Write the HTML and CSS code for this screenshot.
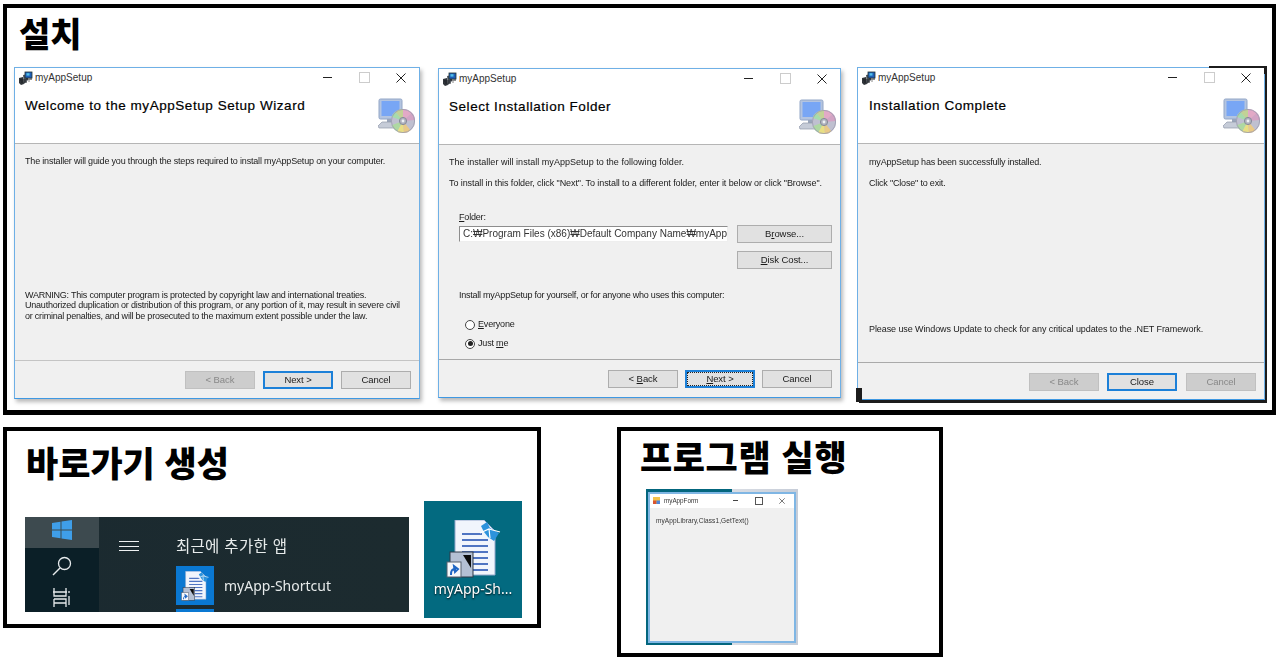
FILE: index.html
```html
<!DOCTYPE html>
<html lang="ko">
<head>
<meta charset="utf-8">
<title>설치</title>
<link rel="stylesheet" href="styles.css">
</head>
<body>
<svg class="defs" width="0" height="0" aria-hidden="true">
  <defs>
    <clipPath id="cdclip"><circle cx="25" cy="23" r="12"/></clipPath>
    <symbol id="setup" viewBox="0 0 37 35">
      <rect x="1" y="1" width="23" height="20" rx="1.5" fill="#b3c4e0" stroke="#93a6c6"/>
      <rect x="3.5" y="3" width="18" height="15" fill="#78a6f5"/>
      <rect x="9" y="21" width="7" height="3" fill="#9aa6bb"/>
      <path d="M0 28l4-4h13l3 4-2 2H1z" fill="#c6ccd8" stroke="#8f98ab" stroke-width=".7"/>
      <g clip-path="url(#cdclip)">
        <rect x="12" y="10" width="26" height="26" fill="#bfc0d0"/>
        <path d="M25 23L25 10 36 13z" fill="#e2a9c6"/>
        <path d="M25 23L36 13 38 22z" fill="#d3a3c4"/>
        <path d="M25 23L12 18 16 12z" fill="#a6dcab"/>
        <path d="M25 23L16 12 25 10z" fill="#c2d296"/>
        <path d="M25 23L18 36 12 28z" fill="#aed8a2"/>
        <path d="M25 23L18 36 26 36z" fill="#e8df84"/>
        <path d="M25 23L26 36 33 33z" fill="#e9c987"/>
      </g>
      <circle cx="25" cy="23" r="11.6" fill="none" stroke="#9a9aae" stroke-width=".8"/>
      <circle cx="25" cy="23" r="3.6" fill="#b0b3bf" stroke="#878b9a"/>
      <circle cx="25" cy="23" r="1.4" fill="#eef0f4"/>
    </symbol>
    <symbol id="appicon" viewBox="0 0 14 14">
      <path d="M0 7l4-1 1 7-3 1-2-2z" fill="#30353a"/>
      <path d="M4 4l5-1v6l-4 4z" fill="#50575f"/>
      <rect x="6" y="1" width="7" height="6" fill="#1f5fb8" stroke="#233" stroke-width=".8"/>
      <rect x="7.5" y="2.2" width="3" height="2.4" fill="#52c0e8"/>
      <path d="M1 9h6M2 11h6M7 8h6" stroke="#1c2024" stroke-width="1"/>
      <path d="M10 7v4" stroke="#888" stroke-width="1"/>
    </symbol>
    <symbol id="closex" viewBox="0 0 10 10">
      <path d="M.5.500l9 9M9.500.500l-9 9" stroke="#222" stroke-width="1" fill="none"/>
    </symbol>
    <symbol id="doc" viewBox="0 0 55 58">
      <path d="M9 0h29l11 11v44H9z" fill="#f1f5fc" stroke="#93a8cc"/>
      <path d="M16 14h20M16 20h26M16 26h26M16 32h26M16 38h26M27 44h15M27 50h15" stroke="#4f74c2" stroke-width="2.200"/>
      <path d="M35 6l6-4 3 6 9 5-5 8-6-4-4-5z" fill="#2d93dc"/>
      <path d="M34 13l9-4 1 9M43 9l11 3" fill="none" stroke="#fff" stroke-width="1.200"/>
      <rect x="4" y="32" width="23" height="25" fill="#b4c0d4" stroke="#2f3846"/>
      <path d="M17 35h8v13z" fill="#0c0c0c"/>
      <rect x="1" y="42" width="14" height="15" fill="#f6f8fb" stroke="#56606f"/>
      <path d="M5 55c0-5 1-6 5-6M8 46l4 3-3 3z" fill="none" stroke="#1f66c4" stroke-width="2"/>
    </symbol>
  </defs>
</svg>

<main class="sheet">
  <section class="panel panel-install">
    <h1 class="heading heading-install">설치</h1>
    <div class="win-row">
      <article class="win win-one">
        <header class="titlebar">
          <svg class="app-icon"><use href="#appicon"/></svg>
          <span class="title-text">myAppSetup</span>
          <span class="controls">
            <i class="ctl ctl-min"></i><i class="ctl ctl-max"></i><i class="ctl"><svg class="close-x"><use href="#closex"/></svg></i>
          </span>
        </header>
        <div class="banner">
          <h2 class="banner-title">Welcome to the myAppSetup Setup Wizard</h2>
          <svg class="setup-icon"><use href="#setup"/></svg>
        </div>
        <div class="content">
          <p class="line">The installer will guide you through the steps required to install myAppSetup on your computer.</p>
          <p class="warning">WARNING: This computer program is protected by copyright law and international treaties.<br>Unauthorized duplication or distribution of this program, or any portion of it, may result in severe civil<br>or criminal penalties, and will be prosecuted to the maximum extent possible under the law.</p>
        </div>
        <footer class="actions">
          <span class="btn btn-off">&lt; Back</span>
          <span class="btn btn-default">Next &gt;</span>
          <span class="btn">Cancel</span>
        </footer>
      </article>

      <article class="win win-two">
        <header class="titlebar">
          <svg class="app-icon"><use href="#appicon"/></svg>
          <span class="title-text">myAppSetup</span>
          <span class="controls">
            <i class="ctl ctl-min"></i><i class="ctl ctl-max"></i><i class="ctl"><svg class="close-x"><use href="#closex"/></svg></i>
          </span>
        </header>
        <div class="banner">
          <h2 class="banner-title">Select Installation Folder</h2>
          <svg class="setup-icon"><use href="#setup"/></svg>
        </div>
        <div class="content">
          <p class="line line-full">The installer will install myAppSetup to the following folder.</p>
          <p class="line line-wide line-next">To install in this folder, click "Next". To install to a different folder, enter it below or click "Browse".</p>
          <div class="folder">
            <div class="folder-main">
              <p class="line"><u>F</u>older:</p>
              <div class="path">C:₩Program Files (x86)₩Default Company Name₩myApp</div>
            </div>
            <div class="folder-btns">
              <span class="btn btn-wide">B<u>r</u>owse...</span>
              <span class="btn btn-wide"><u>D</u>isk Cost...</span>
            </div>
          </div>
          <p class="line line-install">Install myAppSetup for yourself, or for anyone who uses this computer:</p>
          <div class="radio-row radio-first"><i class="radio"></i><span class="line"><u>E</u>veryone</span></div>
          <div class="radio-row"><i class="radio radio-on"></i><span class="line">Just <u>m</u>e</span></div>
        </div>
        <footer class="actions">
          <span class="btn">&lt; <u>B</u>ack</span>
          <span class="btn btn-default btn-focus"><u>N</u>ext &gt;</span>
          <span class="btn">Cancel</span>
        </footer>
      </article>

      <article class="win win-three">
        <header class="titlebar">
          <svg class="app-icon"><use href="#appicon"/></svg>
          <span class="title-text">myAppSetup</span>
          <span class="controls">
            <i class="ctl ctl-min"></i><i class="ctl ctl-max"></i><i class="ctl"><svg class="close-x"><use href="#closex"/></svg></i>
          </span>
        </header>
        <div class="banner">
          <h2 class="banner-title">Installation Complete</h2>
          <svg class="setup-icon"><use href="#setup"/></svg>
        </div>
        <div class="content">
          <p class="line">myAppSetup has been successfully installed.</p>
          <p class="line line-next">Click "Close" to exit.</p>
          <p class="line line-wide line-update">Please use Windows Update to check for any critical updates to the .NET Framework.</p>
        </div>
        <footer class="actions">
          <span class="btn btn-off">&lt; Back</span>
          <span class="btn btn-default">Close</span>
          <span class="btn btn-off">Cancel</span>
        </footer>
      </article>
    </div>
  </section>

  <div class="lower">
    <section class="panel panel-shortcut">
      <h1 class="heading heading-shortcut">바로가기 생성</h1>
      <div class="shots">
        <div class="startmenu">
          <div class="rail">
            <div class="rail-tile">
              <svg class="win-logo" viewBox="0 0 20 20"><path d="M0 3l8.500-1.200V9.500H0zM9.500 1.600L20 0v9.500H9.500zM0 10.500h8.500v7.700L0 17zM9.500 10.500H20V20L9.500 18.400z" fill="#3f9ee8"/></svg>
            </div>
            <svg class="rail-search" viewBox="0 0 20 20"><circle cx="12.500" cy="7.500" r="6" fill="none" stroke="#e6eaec" stroke-width="1.300"/><path d="M8 12l-7 7" stroke="#e6eaec" stroke-width="1.500"/></svg>
            <svg class="rail-tasks" viewBox="0 0 20 20"><path d="M2 1v8h12V1M1 5h14M2 12h12v8M2 12v8M2 16h12M17 4v2M17 9v9" fill="none" stroke="#e6eaec" stroke-width="1.300"/></svg>
          </div>
          <div class="burger-col"><i class="burger"></i></div>
          <div class="applist">
            <div class="applist-head">최근에 추가한 앱</div>
            <div class="app-row">
              <span class="app-tile"><svg class="app-doc"><use href="#doc"/></svg></span>
              <span class="app-name">myApp-Shortcut</span>
            </div>
            <span class="app-tile app-tile-next"></span>
          </div>
        </div>
        <div class="desktop">
          <svg class="desktop-doc"><use href="#doc"/></svg>
          <span class="desktop-label">myApp-Sh...</span>
        </div>
      </div>
    </section>

    <section class="panel panel-run">
      <h1 class="heading heading-run">프로그램 실행</h1>
      <div class="formshot">
        <article class="form">
          <header class="form-bar">
            <svg class="form-icon" viewBox="0 0 8 8"><rect width="8" height="8" fill="#f3c24a"/><rect y="4" width="4" height="4" fill="#d9542f"/><rect x="4" y="4" width="4" height="4" fill="#4f86d9"/></svg>
            <span class="form-title">myAppForm</span>
            <span class="form-controls">
              <i class="fctl fctl-min"></i><i class="fctl fctl-max"></i><i class="fctl"><svg class="form-x"><use href="#closex"/></svg></i>
            </span>
          </header>
          <div class="form-body">myAppLibrary,Class1,GetText()</div>
        </article>
      </div>
    </section>
  </div>
</main>
</body>
</html>
```

FILE: styles.css
```css
* { box-sizing: border-box; }
html, body { margin: 0; padding: 0; background: #fff; }
body { width: 1284px; height: 666px; overflow: hidden; }
.defs { position: absolute; }
p { margin: 0; }
i { font-style: normal; }

.sheet { padding: 4px 0 0 3px; font-family: "Liberation Sans", Arial, sans-serif; color: #1a1a1a; }

.panel { border: 4px solid #000; background: #fff; }
.panel-install { width: 1273px; height: 411px; border-bottom-width: 5px; }
.lower { display: flex; align-items: flex-start; gap: 76px; margin-top: 12px; }
.panel-shortcut { width: 538px; height: 201px; }
.panel-run { width: 326px; height: 230px; }

.heading { margin: 0; font-family: "Noto Sans CJK KR", sans-serif; font-weight: 900; color: #000; font-size: 35px; line-height: 44px; }
.heading-install { height: 59px; padding: 3px 0 0 12px; font-size: 34px; }
.heading-shortcut { height: 70px; padding: 9px 0 0 19px; }
.heading-run { height: 58px; padding: 3px 0 0 19px; letter-spacing: .6px; }

.win-row { display: flex; align-items: flex-start; padding-left: 7px; }
.win { display: flex; flex-direction: column; position: relative; background: #f0f0f0; border: 1px solid #6fb0e6; border-bottom-color: #3f98e2; box-shadow: 2px 3px 4px rgba(0,0,0,.28); filter: blur(.35px); }
.win-one { width: 406px; height: 332px; }
.win-two { width: 403px; height: 330px; margin: 1px 0 0 18px; }
.win-three { width: 408px; height: 333px; margin-left: 16px; box-shadow: 2px 3px 0 #1c1c1c; }
.win-three::before { content: ""; position: absolute; z-index: -1; top: -2px; right: -3px; width: 58px; height: 8px; background: #1c1c1c; }
.win-three::after { content: ""; position: absolute; z-index: -1; left: -2px; bottom: -3px; width: 6px; height: 14px; background: #1c1c1c; }

.titlebar { display: flex; align-items: center; height: 19px; padding: 0 0 0 4px; background: #fff; flex: none; }
.app-icon { width: 14px; height: 14px; flex: none; }
.title-text { margin-left: 2px; font-size: 10px; color: #333; }
.controls { display: flex; margin-left: auto; }
.ctl { display: flex; align-items: center; justify-content: center; width: 36.500px; height: 17px; }
.ctl-min::before { content: ""; width: 9px; height: 1px; background: #222; }
.ctl-max::before { content: ""; width: 9px; height: 9px; border: 1px solid #ccc; }
.close-x { width: 10px; height: 10px; }

.banner { display: flex; justify-content: space-between; flex: none; padding: 11px 4px 0 10px; height: 57px; background: #fff; border-bottom: 1px solid #b5b5b5; }
.banner-title { margin: 0; font-family: "Liberation Sans", Arial, sans-serif; font-size: 13.500px; line-height: 16px; font-weight: 400; letter-spacing: .55px; color: #000; -webkit-text-stroke: .2px #000; }
.setup-icon { width: 37px; height: 35px; flex: none; }

.content { display: flex; flex-direction: column; flex: 1; padding: 12px 10px 0; min-height: 0; }
.line { font-size: 9px; line-height: 11px; color: #1a1a1a; letter-spacing: -.18px; }
.line-wide { letter-spacing: -.09px; }
.line-full { letter-spacing: .03px; }
.line-next { margin-top: 10px; }
.warning { margin-top: auto; padding-bottom: 39px; font-size: 9px; line-height: 10.500px; color: #1a1a1a; letter-spacing: -.22px; white-space: nowrap; }
.line-update { margin-top: auto; padding-bottom: 27px; }

.win-three .banner { padding-left: 11px; }
.win-three .content { padding: 13px 11px 0; }

.folder { display: flex; gap: 9px; margin: 23px 0 0 10px; }
.folder-main { width: 269px; }
.path { width: 269px; height: 16px; margin-top: 3px; padding-left: 3px; overflow: hidden; white-space: nowrap; background: #fff; border: 1px solid #8d8d8d; border-right-color: #eee; border-bottom-color: #eee; font-size: 10px; line-height: 14px; color: #333; }
.folder-btns { display: flex; flex-direction: column; gap: 8px; margin-top: 13px; }
.line-install { margin: 21px 0 0 10px; letter-spacing: -.24px; }
.radio-row { display: flex; align-items: center; gap: 3px; height: 11px; margin: 8px 0 0 16px; }
.radio-first { margin-top: 18px; }
.radio { width: 10px; height: 10px; border: 1px solid #444; border-radius: 50%; background: #fff; position: relative; flex: none; }
.radio-on::after { content: ""; position: absolute; inset: 1.500px; border-radius: 50%; background: #222; }

.actions { display: flex; justify-content: flex-end; gap: 8px; height: 38px; padding: 10px 8px 0 0; border-top: 1px solid #c4c4c4; flex: none; }
.win-two .actions { border-top-color: #a8a8a8; gap: 7px; }
.win-three .actions { border-top-color: #aaa; height: 37px; }
.win-three .btn:last-child { margin-left: 1px; }
.btn { display: block; width: 70px; height: 18px; background: #e1e1e1; border: 1px solid #adadad; font-size: 9.500px; line-height: 16px; text-align: center; letter-spacing: -.08px; color: #1a1a1a; flex: none; }
.btn-wide { width: 95px; }
.btn-off { background: #cdcdcd; border-color: #c0c0c0; color: #888; }
.btn-default { border: 2px solid #1c80d8; line-height: 14px; }
.btn-focus { outline: 1px dotted #222; outline-offset: -3px; }

.shots { display: flex; align-items: flex-start; gap: 15px; padding-left: 18px; }
.startmenu { display: flex; width: 384px; height: 95px; margin-top: 16px; overflow: hidden; background: linear-gradient(90deg, #1b2a30, #1c2b2f); filter: blur(.3px); }
.rail { display: flex; flex-direction: column; align-items: center; width: 74px; background: #0b1f27; flex: none; }
.rail-tile { display: flex; justify-content: center; width: 100%; height: 31px; padding-top: 3px; background: #3d4a4f; flex: none; }
.win-logo { width: 20px; height: 20px; }
.rail-search { width: 20px; height: 20px; margin-top: 8px; flex: none; }
.rail-tasks { width: 20px; height: 20px; margin-top: 11px; flex: none; }
.burger-col { width: 77px; padding: 24px 0 0 20px; flex: none; }
.burger { display: block; width: 20px; height: 10px; border-top: 1px solid #eef1f2; border-bottom: 1px solid #eef1f2; position: relative; }
.burger::after { content: ""; position: absolute; left: 0; right: 0; top: 3.500px; height: 1px; background: #eef1f2; }
.applist { flex: 1; }
.applist-head { height: 49px; padding-top: 18px; font-family: "Noto Sans CJK KR", sans-serif; font-size: 15.500px; line-height: 20px; letter-spacing: .3px; color: #e8ecec; }
.app-row { display: flex; align-items: center; gap: 10px; }
.app-tile { display: flex; align-items: center; justify-content: center; width: 38px; height: 39px; background: #0a78d2; flex: none; }
.app-tile-next { height: 8px; margin-top: 4px; }
.app-doc { width: 28px; height: 30px; }
.app-name { font-family: "Noto Sans", sans-serif; font-size: 14px; color: #e6eaea; }

.desktop { display: flex; flex-direction: column; align-items: center; width: 98px; height: 117px; padding-top: 19px; background: #036a80; filter: blur(.3px); }
.desktop-doc { width: 55px; height: 58px; flex: none; }
.desktop-label { margin-top: 1px; font-family: "Noto Sans", sans-serif; font-size: 14px; line-height: 20px; color: #fff; white-space: nowrap; text-shadow: 0 1px 2px #000; }

.formshot { width: 152px; height: 156px; margin-left: 25px; padding: 3px 2px 2px; background: linear-gradient(90deg, #03667e 0, #03667e 86px, #d9dde4 86px, #c6cdd8 100%); }
.form { display: flex; flex-direction: column; height: 100%; background: #f0f0f0; border: 2px solid #7fb6e4; filter: blur(.3px); }
.form-bar { display: flex; align-items: center; height: 14px; padding: 0 0 1px 3px; background: #fff; flex: none; }
.form-icon { width: 7px; height: 7px; flex: none; }
.form-title { margin-left: 4px; font-size: 6.300px; color: #333; }
.form-controls { display: flex; margin-left: auto; }
.fctl { display: flex; align-items: center; justify-content: center; width: 23.500px; height: 13px; }
.fctl-min::before { content: ""; width: 5px; height: 1px; background: #444; }
.fctl-max::before { content: ""; width: 6px; height: 6px; border: 1px solid #555; }
.form-x { width: 6px; height: 6px; }
.form-body { padding: 8px 0 0 6px; font-size: 6.500px; line-height: 9px; letter-spacing: .1px; color: #333; }
```
